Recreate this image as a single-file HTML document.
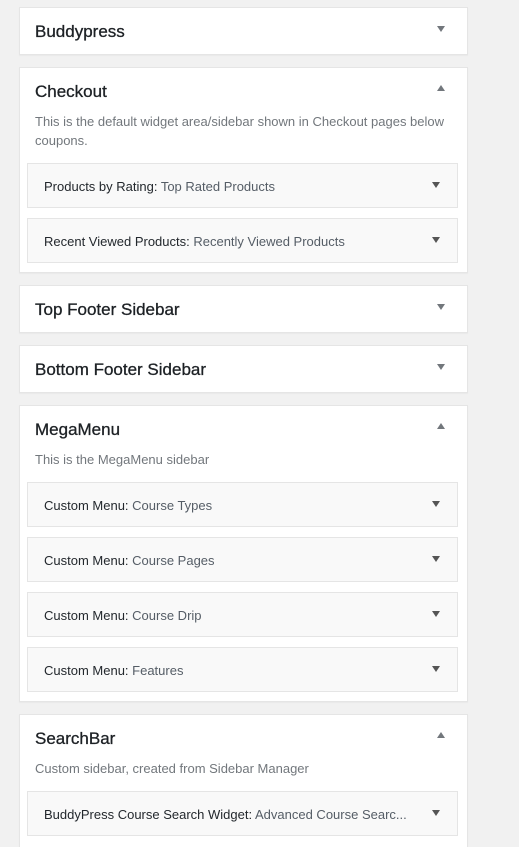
<!DOCTYPE html>
<html style="overflow:hidden;height:847px"><head><style>
body{margin:0;background:#f1f1f1;width:519px;height:847px;overflow:hidden;position:relative;font-family:"Liberation Sans",sans-serif;}
.box{position:absolute;left:19px;width:447px;background:#fff;border:1px solid #e5e5e5;box-shadow:0 1px 1px rgba(0,0,0,.04);}
.t{position:absolute;left:15px;font-size:17px;color:#1d2125;-webkit-text-stroke:0.3px #1d2125;}
.ar{position:absolute;left:417px;width:0;height:0;border-left:4.5px solid transparent;border-right:4.5px solid transparent;}
.dn{border-top:6px solid #72777c;}
.up{border-bottom:6px solid #72777c;}
.d{position:absolute;left:15px;width:410px;font-size:13px;line-height:19px;color:#72777c;}
.w{position:absolute;left:7px;width:429px;height:43px;background:#f9f9f9;border:1px solid #e5e5e5;}
.w span{position:absolute;left:16px;top:15px;font-size:13px;color:#23282d;white-space:nowrap;}
.w i{font-style:normal;color:#555d66;}
.w .ar{left:404px;top:18px;border-top:6px solid #555;}
</style></head><body>
<div class="box" style="top:7px;height:46px"><div class="t" style="top:14px">Buddypress</div><div class="ar dn" style="top:18px"></div></div>

<div class="box" style="top:67px;height:204px"><div class="t" style="top:14px">Checkout</div><div class="ar up" style="top:17px"></div>
<div class="d" style="top:44px">This is the default widget area/sidebar shown in Checkout pages below coupons.</div>
<div class="w" style="top:95px"><span>Products by Rating: <i>Top Rated Products</i></span><div class="ar"></div></div>
<div class="w" style="top:150px"><span>Recent Viewed Products: <i>Recently Viewed Products</i></span><div class="ar"></div></div>
</div>

<div class="box" style="top:285px;height:46px"><div class="t" style="top:14px">Top Footer Sidebar</div><div class="ar dn" style="top:18px"></div></div>
<div class="box" style="top:345px;height:46px"><div class="t" style="top:14px">Bottom Footer Sidebar</div><div class="ar dn" style="top:18px"></div></div>

<div class="box" style="top:405px;height:295px"><div class="t" style="top:14px">MegaMenu</div><div class="ar up" style="top:17px"></div>
<div class="d" style="top:44px">This is the MegaMenu sidebar</div>
<div class="w" style="top:76px"><span>Custom Menu: <i>Course Types</i></span><div class="ar"></div></div>
<div class="w" style="top:131px"><span>Custom Menu: <i>Course Pages</i></span><div class="ar"></div></div>
<div class="w" style="top:186px"><span>Custom Menu: <i>Course Drip</i></span><div class="ar"></div></div>
<div class="w" style="top:241px"><span>Custom Menu: <i>Features</i></span><div class="ar"></div></div>
</div>

<div class="box" style="top:714px;height:160px"><div class="t" style="top:14px">SearchBar</div><div class="ar up" style="top:17px"></div>
<div class="d" style="top:44px">Custom sidebar, created from Sidebar Manager</div>
<div class="w" style="top:76px"><span>BuddyPress Course Search Widget: <i>Advanced Course Searc...</i></span><div class="ar"></div></div>
</div>
</body></html>
